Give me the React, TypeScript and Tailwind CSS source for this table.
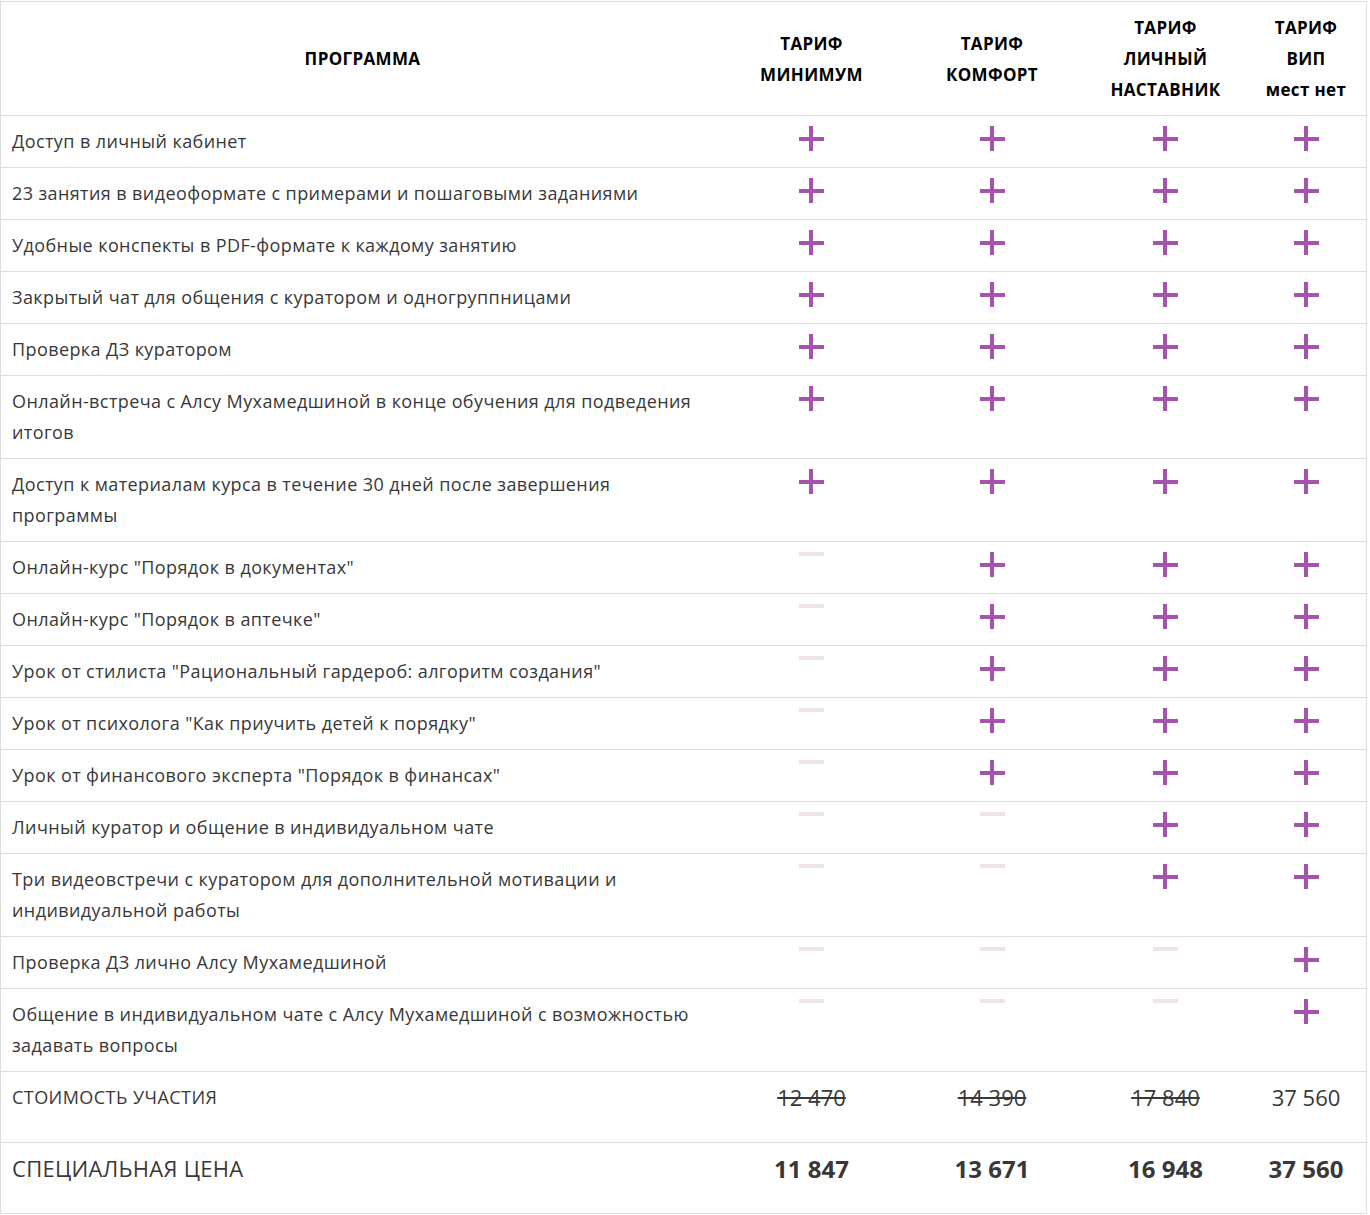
import React from 'react';

type Row = {
  title: string;
  marks: boolean[];
};

const rows: Row[] = [
  { title: 'Доступ в личный кабинет', marks: [true, true, true, true] },
  { title: '23 занятия в видеоформате с примерами и пошаговыми заданиями', marks: [true, true, true, true] },
  { title: 'Удобные конспекты в PDF-формате к каждому занятию', marks: [true, true, true, true] },
  { title: 'Закрытый чат для общения с куратором и одногруппницами', marks: [true, true, true, true] },
  { title: 'Проверка ДЗ куратором', marks: [true, true, true, true] },
  { title: 'Онлайн-встреча с Алсу Мухамедшиной в конце обучения для подведения итогов', marks: [true, true, true, true] },
  { title: 'Доступ к материалам курса в течение 30 дней после завершения программы', marks: [true, true, true, true] },
  { title: 'Онлайн-курс "Порядок в документах"', marks: [false, true, true, true] },
  { title: 'Онлайн-курс "Порядок в аптечке"', marks: [false, true, true, true] },
  { title: 'Урок от стилиста "Рациональный гардероб: алгоритм создания"', marks: [false, true, true, true] },
  { title: 'Урок от психолога "Как приучить детей к порядку"', marks: [false, true, true, true] },
  { title: 'Урок от финансового эксперта "Порядок в финансах"', marks: [false, true, true, true] },
  { title: 'Личный куратор и общение в индивидуальном чате', marks: [false, false, true, true] },
  { title: 'Три видеовстречи с куратором для дополнительной мотивации и индивидуальной работы', marks: [false, false, true, true] },
  { title: 'Проверка ДЗ лично Алсу Мухамедшиной', marks: [false, false, false, true] },
  { title: 'Общение в индивидуальном чате с Алсу Мухамедшиной с возможностью задавать вопросы', marks: [false, false, false, true] },
];

const oldPrices = [
  { value: '12 470', struck: true },
  { value: '14 390', struck: true },
  { value: '17 840', struck: true },
  { value: '37 560', struck: false },
];

const newPrices = ['11 847', '13 671', '16 948', '37 560'];

const grid = 'grid grid-cols-[723px_175px_186px_161px_120px] border-b border-[#dddddd]';

const Plus = () => (
  <svg width="25" height="25" viewBox="0 0 25 25" className="mx-auto block">
    <rect x="10" y="0" width="4" height="25" fill="#a653ae" />
    <rect x="0" y="11" width="25" height="4" fill="#a653ae" />
  </svg>
);

const Minus = () => <div className="mx-auto h-1 w-[25px] bg-[#efe2eb]" />;

const App = () => {
  return (
    <div className="bg-white pt-px font-['Open_Sans',sans-serif]">
      <div className="w-[1367px] border-x border-t border-[#dddddd] text-[#383838]">
        <div className={`${grid} h-[114px] text-[17px] font-bold uppercase leading-[31px] tracking-[0.35px] text-black`}>
          <div className="flex items-center justify-center">Программа</div>
          <div className="flex items-center justify-center text-center">
            Тариф
            <br />
            минимум
          </div>
          <div className="flex items-center justify-center text-center">
            Тариф
            <br />
            комфорт
          </div>
          <div className="flex items-center justify-center text-center">
            Тариф
            <br />
            личный
            <br />
            наставник
          </div>
          <div className="flex items-center justify-center text-center">
            <span>
              Тариф
              <br />
              вип
              <br />
              <span className="normal-case">мест нет</span>
            </span>
          </div>
        </div>

        {rows.map((row) => (
          <div key={row.title} className={`${grid} text-[18px] leading-[31px]`}>
            <div className="py-[10px] pl-[11px] pr-4 tracking-[0.4px]">{row.title}</div>
            {row.marks.map((on, i) => (
              <div key={i} className="pt-[10px]">
                {on ? <Plus /> : <Minus />}
              </div>
            ))}
          </div>
        ))}

        <div className={`${grid} h-[71px] text-[18px] leading-[31px]`}>
          <div className="pt-[10px] pl-[11px] tracking-[0.45px]">СТОИМОСТЬ УЧАСТИЯ</div>
          {oldPrices.map((p) => (
            <div key={p.value} className="pt-[10px] text-center text-[22px]">
              <span className={p.struck ? 'line-through' : ''}>{p.value}</span>
            </div>
          ))}
        </div>

        <div className={`${grid} h-[71px] leading-[31px]`}>
          <div className="pt-[10px] pl-[11px] text-[22px] tracking-[0.3px]">СПЕЦИАЛЬНАЯ ЦЕНА</div>
          {newPrices.map((p) => (
            <div key={p} className="pt-[10px] text-center text-[24px] font-bold">
              {p}
            </div>
          ))}
        </div>
      </div>
    </div>
  );
};

export default App;
